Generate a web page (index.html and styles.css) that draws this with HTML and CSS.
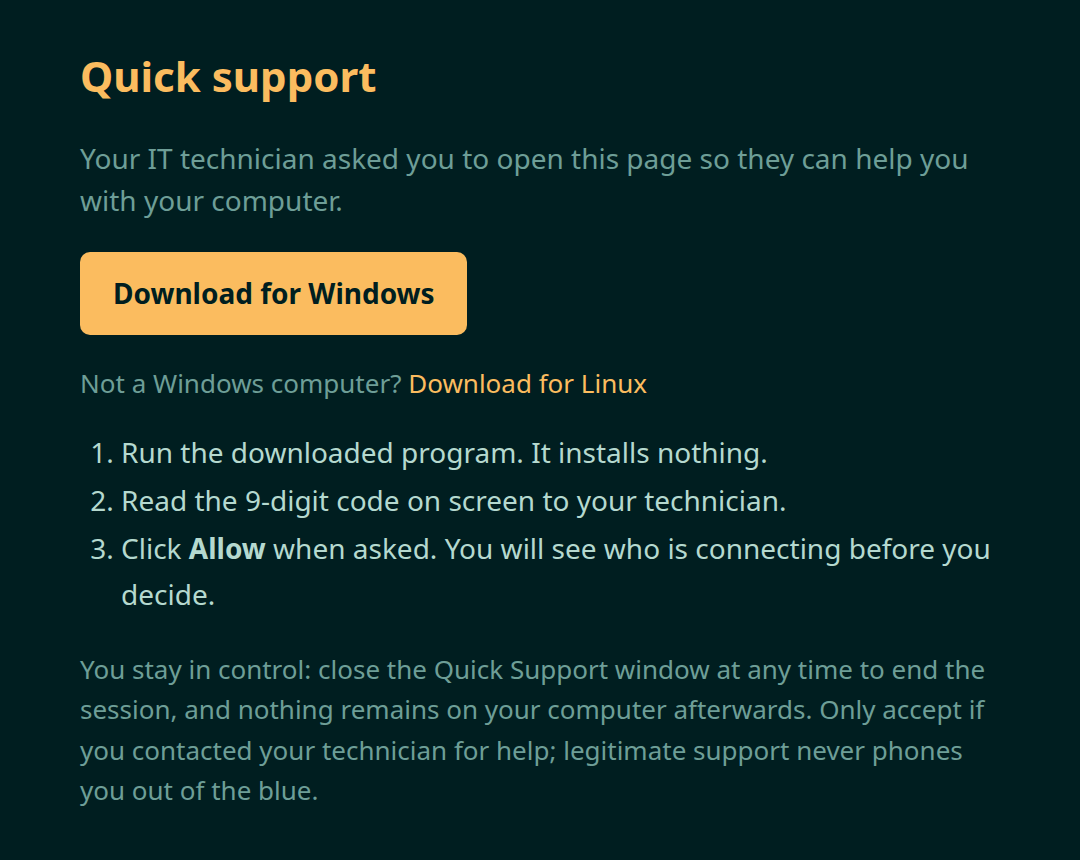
FILE: index.html
```html
<!DOCTYPE html>
<html lang="en">
<head>
<meta charset="utf-8">
<title>Quick support</title>
<link rel="stylesheet" href="styles.css">
</head>
<body>
<main class="page">
  <h1 class="title">Quick support</h1>
  <p class="intro">Your IT technician asked you to open this page so they can help you with your computer.</p>
  <a class="btn" href="#">Download for Windows</a>
  <p class="alt">Not a Windows computer? <a class="alt-link" href="#">Download for Linux</a></p>
  <ol class="steps">
    <li>Run the downloaded program. It installs nothing.</li>
    <li>Read the 9-digit code on screen to your technician.</li>
    <li>Click <strong>Allow</strong> when asked. You will see who is connecting before you decide.</li>
  </ol>
  <p class="note">You stay in control: close the Quick Support window at any time to end the session, and nothing remains on your computer afterwards. Only accept if you contacted your technician for help; legitimate support never phones you out of the blue.</p>
</main>
</body>
</html>
```

FILE: styles.css
```css
html, body {
  margin: 0;
  padding: 0;
  background: #001e20;
}
body {
  font-family: "Noto Sans", "Open Sans", sans-serif;
  color: #6e9e97;
}
.page {
  padding: 50px 80px 40px 80px;
  max-width: 920px;
}
.title {
  margin: 0;
  font-size: 42px;
  font-weight: 700;
  line-height: 52px;
  color: #fbbc5f;
}
.intro {
  margin: 35px 0 0;
  font-size: 28px;
  line-height: 42px;
  color: #6e9e97;
}
.btn {
  display: inline-block;
  margin-top: 31px;
  padding: 0 32px 0 33px;
  height: 83px;
  line-height: 83px;
  background: #fbbc5f;
  color: #001e20;
  border-radius: 10px;
  font-size: 28px;
  font-weight: 700;
  text-decoration: none;
}
.alt {
  margin: 30px 0 0;
  font-size: 26px;
  line-height: 36px;
}
.alt-link {
  color: #fbbc5f;
  text-decoration: none;
}
.steps {
  margin: 28px 0 0;
  padding-left: 41px;
  font-size: 28px;
  line-height: 46px;
  color: #b5d9cf;
}
.steps li + li {
  margin-top: 2px;
}
.steps strong {
  font-weight: 700;
}
.note {
  margin: 32px 0 0;
  font-size: 26px;
  line-height: 40.3px;
}
```
